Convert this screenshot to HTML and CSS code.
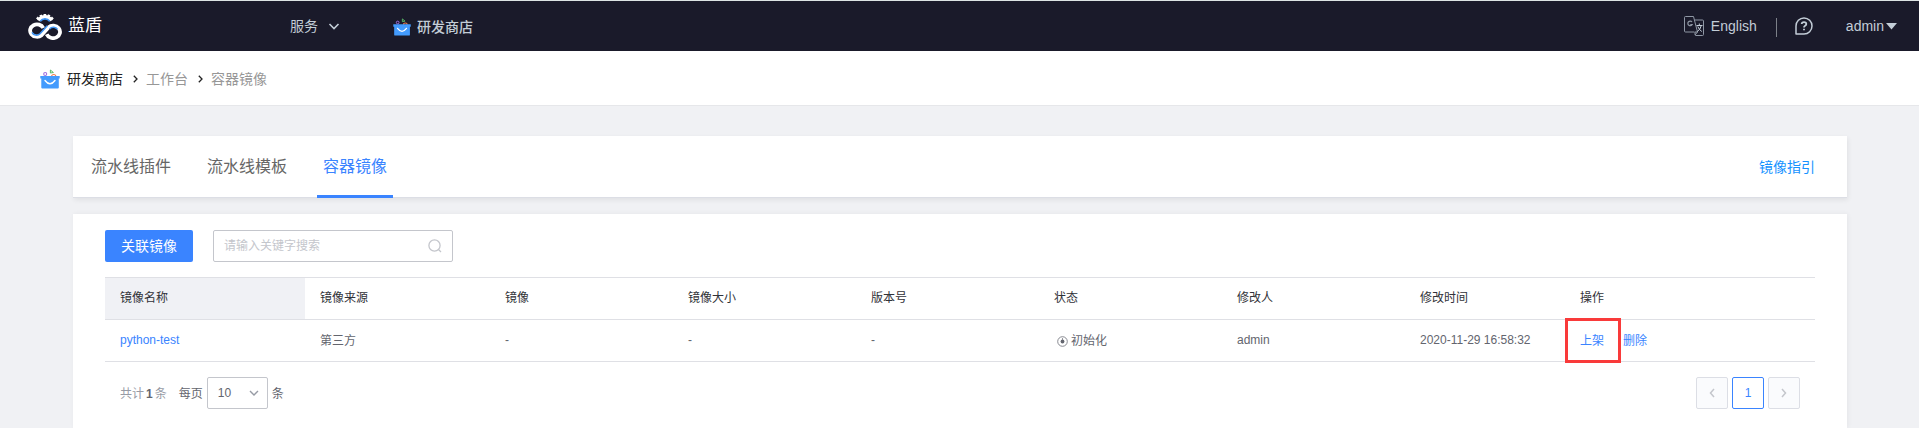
FILE: index.html
```html
<!DOCTYPE html>
<html lang="zh-CN">
<head>
<meta charset="utf-8">
<title>研发商店</title>
<link rel="stylesheet" href="styles.css">
</head>
<body>
<svg class="defs" aria-hidden="true">
  <symbol id="store" viewBox="0 0 20 20">
    <circle cx="5.200" cy="5" r="1.500" fill="none" stroke="#a070e0" stroke-width="1.100"/>
    <path d="M10.400 4V1l3 2.500z" fill="none" stroke="#5bb968" stroke-width="1"/>
    <path d="M11.600 7.500a2.100 2 0 0 1 4.200 0" fill="none" stroke="#ef7d4d" stroke-width="1.200"/>
    <path d="M.3 7h19.400v2.600h-.9V18.500q0 1-1 1H2.300q-1 0-1-1V9.600H.3z" fill="#439bfd"/>
    <path d="M5 11.500q5 6.500 10 0" fill="none" stroke="#fff" stroke-width="1.400" stroke-linecap="round"/>
  </symbol>
</svg>
<header class="header">
  <div class="logo">
    <svg width="34" height="29" viewBox="0 0 34 29" fill="none">
      <path d="M10.600 9.600a7.400 7.400 0 0 1 12.800 0" stroke="#fff" stroke-width="3.600"/>
      <path d="M8.800 8.800a9.600 9.600 0 0 1 16.400 0" stroke="#fff" stroke-width="2.600" stroke-dasharray="2.400 1.500" stroke-dashoffset="-.6"/>
      <path d="M12.300 10.200a5.800 5.800 0 0 1 9.400 0" stroke="#3f95f5" stroke-width="1.700"/>
      <path d="M15.300 17A6.900 6.200 0 1 0 13.600 24.200L20.400 16.400A6.900 6.200 0 1 1 18.700 23.200" stroke="#fff" stroke-width="3.800"/>
      <path d="M4 21.400a4.800 4.200 0 0 0 8 1.400l7.300-8M21.600 18a4.800 4.200 0 0 1 8 .4" stroke="#3f95f5" stroke-width="1.500"/>
    </svg>
    <span>蓝盾</span>
  </div>
  <div class="service">服务<svg width="12" height="7" viewBox="0 0 12 7"><path d="M1.500 1L6 5.500 10.500 1" fill="none" stroke="#c3cdd7" stroke-width="1.600"/></svg></div>
  <div class="current"><svg width="18" height="18"><use href="#store"/></svg>研发商店</div>
  <div class="user">
    <svg width="20" height="20" viewBox="0 0 20 20" fill="none" stroke="#8f97a4">
      <path d="M10.500 16H1.500q-1 0-1-1V1.500q0-1 1-1h8l4 15.500H11v2.500q0 1 1 1h6.500q1 0 1-1V5q0-1-1-1H10.500M13.500 16l-2.500 3"/>
      <path d="M8 6a2.300 2.300 0 1 0 .2 2.500H6.300" stroke-width="1.200"/>
      <path d="M12.500 9.500h6M15.300 7.500v2M17.300 9.500q-.8 4-4 6M13.800 10.500q1 3 4 5" stroke="#c3cdd7"/>
    </svg>
    <span class="lang">English</span>
    <i class="sep"></i>
    <svg width="18" height="18" viewBox="0 0 18 18" fill="none" stroke="#c3cdd7" stroke-width="1.500">
      <path d="M1 17V9a8 8 0 1 1 8 8z" stroke-linejoin="round"/>
      <path d="M6.700 7.100q0-2 2.300-2t2.300 1.900q0 1.100-1.200 1.800T9 10.500M9 11.700v1.600" stroke-width="1.800"/>
    </svg>
    <span class="name">admin</span>
    <svg class="caret" width="11" height="7" viewBox="0 0 11 7"><path d="M0 0h11L5.500 6.500z" fill="#c3cdd7"/></svg>
  </div>
</header>
<nav class="crumbs">
  <svg width="20" height="20"><use href="#store"/></svg>
  <a class="home">研发商店</a>
  <svg class="arrow" width="5" height="8" viewBox="0 0 5 8"><path d="M.8.8L4 4 .8 7.200" fill="none" stroke="#222" stroke-width="1.300"/></svg>
  <a>工作台</a>
  <svg class="arrow" width="5" height="8" viewBox="0 0 5 8"><path d="M.8.8L4 4 .8 7.200" fill="none" stroke="#222" stroke-width="1.300"/></svg>
  <a>容器镜像</a>
</nav>
<main>
  <section class="tabs">
    <a class="tab">流水线插件</a><a class="tab">流水线模板</a><a class="tab active">容器镜像</a>
    <a class="guide">镜像指引</a>
  </section>
  <section class="panel">
    <div class="tools">
      <button class="primary">关联镜像</button>
      <div class="search"><span>请输入关键字搜索</span>
        <svg width="14" height="14" viewBox="0 0 14 14" fill="none" stroke="#c4c6cc" stroke-width="1.300"><circle cx="6.500" cy="6.500" r="5.600"/><path d="M10.500 10.500l2.500 2.500"/></svg>
      </div>
    </div>
    <div class="table">
      <div class="row head">
        <div class="first">镜像名称</div><div>镜像来源</div><div>镜像</div><div>镜像大小</div><div>版本号</div><div>状态</div><div>修改人</div><div>修改时间</div><div>操作</div>
      </div>
      <div class="row">
        <div><a class="link">python-test</a></div><div class="cjk">第三方</div><div>-</div><div>-</div><div>-</div>
        <div class="status cjk"><svg width="11" height="11" viewBox="0 0 11 11"><circle cx="5.500" cy="5.500" r="4.800" fill="none" stroke="#7b7d85" stroke-width=".9"/><circle cx="5.500" cy="5.500" r="1.900" fill="#63656e"/><path d="M5.500 2v2" stroke="#7b7d85" stroke-width=".8"/></svg>初始化</div>
        <div>admin</div><div>2020-11-29 16:58:32</div>
        <div class="ops"><a class="link marked">上架</a><a class="link">删除</a></div>
      </div>
    </div>
    <div class="pager">
      <span class="total">共计<b>1</b>条</span>
      <span class="per">每页</span>
      <div class="select">10<svg width="10" height="7" viewBox="0 0 10 7"><path d="M1 1l4 4 4-4" fill="none" stroke="#979ba5" stroke-width="1.400"/></svg></div>
      <span class="unit">条</span>
      <div class="pages">
        <a class="page off"><svg width="6" height="10" viewBox="0 0 6 10"><path d="M5 1L1.500 5 5 9" fill="none" stroke="#c4c6cc" stroke-width="1.500"/></svg></a>
        <a class="page on">1</a>
        <a class="page off"><svg width="6" height="10" viewBox="0 0 6 10"><path d="M1 1l3.500 4L1 9" fill="none" stroke="#c4c6cc" stroke-width="1.500"/></svg></a>
      </div>
    </div>
  </section>
</main>
</body>
</html>
```
FILE: styles.css
```css
* { box-sizing: border-box; }
body {
  margin: 0;
  height: 428px;
  background: #f0f1f4;
  color: #63656e;
  font: 14px/20px "Liberation Sans", "Noto Sans CJK SC", sans-serif;
}
svg { display: block; flex: none; }
.defs { width: 0; height: 0; position: absolute; }

.header {
  display: flex;
  align-items: center;
  height: 51px;
  padding: 0 22px 0 28px;
  border-top: 1px solid #dde4e4;
  background: #1a1a2a;
  color: #c3cdd7;
}
.logo { display: flex; align-items: center; gap: 6px; width: 262px; color: #fff; font-size: 17px; }
.logo svg { margin-bottom: 1px; }
.service { display: flex; align-items: center; gap: 10px; width: 103px; }
.current { display: flex; align-items: center; gap: 6px; padding-top: 2px; font-weight: 500; }
.user { display: flex; align-items: center; margin-left: auto; }
.lang { width: 65px; padding-left: 7px; }
.sep { width: 1px; height: 19px; margin: 2px 18px 0 7px; background: #7c8088; }
.name { margin-left: 33px; }
.caret { margin-left: 2px; }

.crumbs {
  display: flex;
  align-items: center;
  height: 55px;
  padding: 1px 40px 0;
  border-bottom: 1px solid #e6e7ea;
  background: #fff;
  color: #979797;
}
.home { margin-left: 7px; color: #222; }
.arrow { margin: 0 8px 0 10px; }

main { padding: 30px 72px 0 73px; }
.tabs {
  display: flex;
  height: 62px;
  padding: 0 32px 0 12px;
  gap: 24px;
  border-bottom: 1px solid #dcdee5;
  background: #fff;
  box-shadow: 1px 2px 5px rgba(0, 0, 0, .07);
}
.tab { height: 62px; padding: 0 6px; border-bottom: 3px solid transparent; font-size: 16px; line-height: 61px; color: #666; }
.tab.active { border-color: #3a84ff; color: #3a84ff; }
.guide { margin-left: auto; line-height: 62px; color: #1592ff; }

.panel { height: 214px; margin-top: 16px; padding: 16px 32px 0; background: #fff; box-shadow: 1px 0 5px rgba(0, 0, 0, .05); }
.tools { display: flex; gap: 20px; }
.primary { width: 88px; height: 32px; padding: 0; border: 0; border-radius: 2px; background: #3a84ff; color: #fff; font: inherit; }
.search { display: flex; align-items: center; justify-content: space-between; width: 240px; height: 32px; padding: 0 10px; border: 1px solid #c4c6cc; border-radius: 2px; color: #c4c6cc; font-size: 12px; }

.table { margin-top: 15px; border-top: 1px solid #dfe0e5; font-size: 12px; }
.row { display: grid; grid-template-columns: 200px 185px 183px 183px 183px 183px 183px 160px 250px; height: 42px; border-bottom: 1px solid #dfe0e5; line-height: 40px; }
.row > div { padding-left: 15px; }
.head { color: #313238; }
.row.head > div { line-height: 41px; }
.row > .cjk { line-height: 42px; }
.head .first { background: #f0f1f5; }
.link { color: #3a84ff; }
.row > .status { display: flex; align-items: center; gap: 3px; padding-left: 18px; }
.row > .ops { display: flex; padding-left: 0; line-height: 42px; }
.marked { width: 56px; height: 45px; margin: -2px 2px -2px 0; padding-left: 12px; border: 3px solid #f93a3a; line-height: 40px; }

.pager { display: flex; align-items: center; padding: 15px 15px 0; font-size: 12px; }
.total { color: #979ba5; }
.total b { padding: 0 2px; color: #63656e; }
.per { margin: 0 4px 0 12px; }
.per, .unit, .total { padding-top: 1px; }
.select { display: flex; align-items: center; justify-content: space-between; width: 61px; height: 32px; margin-right: 4px; padding: 0 8px 0 10px; border: 1px solid #c4c6cc; border-radius: 2px; }
.pages { display: flex; gap: 4px; margin-left: auto; }
.page { display: flex; align-items: center; justify-content: center; width: 32px; height: 32px; border: 1px solid #dcdee5; border-radius: 2px; background: #fafbfd; }
.page.on { border-color: #3a84ff; background: #fff; color: #3a84ff; }
```
